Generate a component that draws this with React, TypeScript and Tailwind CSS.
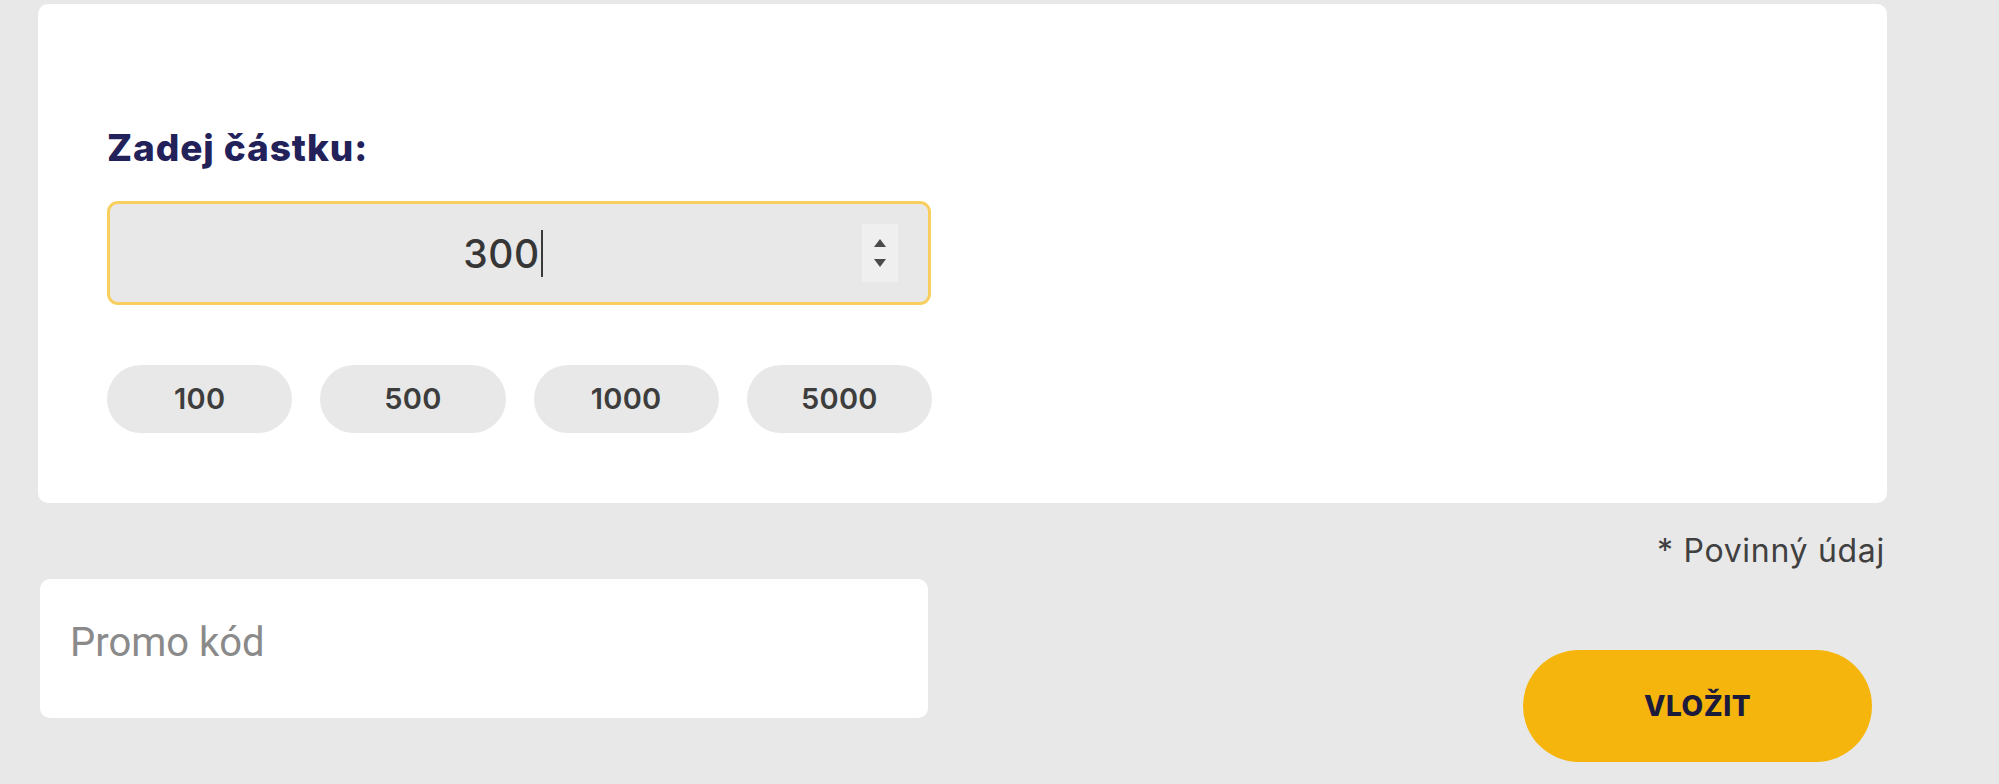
import React from "react";

const amounts = ["100", "500", "1000", "5000"];

export default function App() {
  return (
    <div
      className="min-h-[784px] w-[1999px] bg-[#e8e8e8] pl-[38px] pt-[4px]"
      style={{ fontFamily: "Inter, 'Noto Sans', sans-serif" }}
    >
      <div className="w-[1849px]">
        {/* Card */}
        <div className="h-[499px] rounded-[10px] bg-white pl-[69px] pt-[122px]">
          <div className="text-[37px] font-extrabold leading-[44px] tracking-[0.9px] text-[#22215a]">
            Zadej částku:
          </div>

          <div className="mt-[31px] flex h-[104px] w-[824px] items-center rounded-[11px] border-[3px] border-[#f8cf5e] bg-[#e8e8e8]">
            <div className="flex flex-1 items-center justify-center pl-[34px]">
              <span className="text-[39px] font-medium leading-none tracking-[0.5px] text-[#363636]">300</span>
              <span className="ml-[1px] h-[47px] w-[2px] bg-[#3a3a3a]" />
            </div>
            <div className="mr-[30px] flex h-[58px] w-[36px] flex-col items-center justify-center gap-[12px] bg-[#efefef]">
              <svg width="12" height="8" viewBox="0 0 12 8">
                <path d="M6 0 L12 8 L0 8 Z" fill="#4a4a4a" />
              </svg>
              <svg width="12" height="8" viewBox="0 0 12 8">
                <path d="M0 0 L12 0 L6 8 Z" fill="#4a4a4a" />
              </svg>
            </div>
          </div>

          <div className="mt-[60px] flex w-[825px] gap-[28px]">
            {amounts.map((a) => (
              <div
                key={a}
                className="flex h-[68px] flex-1 items-center justify-center rounded-[34px] bg-[#e8e8e8] text-[29px] font-semibold tracking-[0.3px] text-[#3d3d3d]"
              >
                {a}
              </div>
            ))}
          </div>
        </div>

        {/* Bottom area */}
        <div className="flex items-start justify-between">
          <div className="ml-[2px] mt-[76px] flex h-[139px] w-[888px] items-center rounded-[10px] bg-white pb-[12px] pl-[30px]">
            <span
              className="text-[40px] leading-none text-[#8a8a8a]"
              style={{ fontFamily: "Roboto, 'Liberation Sans', sans-serif" }}
            >
              Promo kód
            </span>
          </div>

          <div className="flex flex-col items-end">
            <div className="mr-[2px] mt-[30px] text-[32px] leading-[36px] tracking-[0.7px] text-[#404040]">
              * Povinný údaj
            </div>
            <button className="mr-[15px] mt-[81px] flex h-[112px] w-[349px] items-center justify-center rounded-full bg-[#f5b50d] text-[28px] font-extrabold tracking-[0.5px] text-[#1c1b3b]">
              VLOŽIT
            </button>
          </div>
        </div>
      </div>
    </div>
  );
}
